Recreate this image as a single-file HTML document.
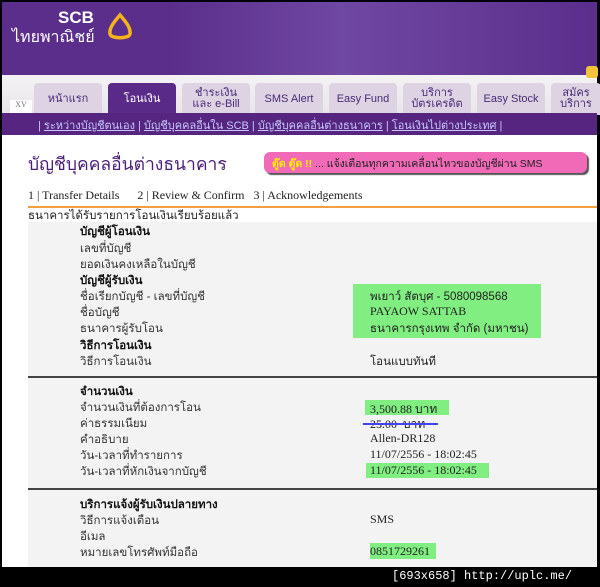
<!DOCTYPE html>
<html><head><meta charset="utf-8"><style>
*{margin:0;padding:0;box-sizing:border-box}
body{width:600px;height:587px;background:#000;position:relative;overflow:hidden;font-family:"Liberation Serif","Noto Sans CJK SC","WenQuanYi Zen Hei",serif;font-size:12px;color:#222}
.a{position:absolute}
.th{font-family:"Liberation Sans","Noto Sans CJK SC","WenQuanYi Zen Hei",sans-serif}
.tab{position:absolute;top:83px;height:32px;background:#ddd3e2;border-radius:4px 4px 0 0;color:#4a2a78;font-family:"Liberation Sans","WenQuanYi Zen Hei",sans-serif;font-size:11px;text-align:center;display:flex;align-items:center;justify-content:center;line-height:11px}
.lbl{position:absolute;left:80px;font-size:11.5px;font-family:"Liberation Sans","WenQuanYi Zen Hei",sans-serif;color:#333}
.b{font-weight:bold;color:#111}
.v{position:absolute;left:370px;font-size:12px;color:#222}
.g{background:#80ee80}
</style></head><body>
<div class="a" style="left:2px;top:2px;width:595px;height:565px;background:#fff"></div>
<div class="a" style="left:2px;top:2px;width:595px;height:73px;background:#5b2e8c"></div>
<div class="a" style="left:170px;top:2px;width:427px;height:73px;background:linear-gradient(90deg,#5b2e8c,#6f48a3 40%,#5b2e8c)"></div>
<div class="a th" style="left:58px;top:8px;color:#fff;font-size:17px;font-weight:bold">SCB</div>
<div class="a th" style="left:12px;top:25px;color:#fff;font-size:16px">ไทยพาณิชย์</div>
<svg class="a" style="left:106px;top:12px" width="28" height="30"><path d="M14 3 C8 10 3 16 4 22 C5 27 23 27 24 22 C25 16 20 10 14 3Z" fill="none" stroke="#f4b21b" stroke-width="3.5"/></svg>
<div class="a" style="left:2px;top:75px;width:595px;height:38px;background:linear-gradient(#f4f2f4,#e9e6ea)"></div>
<div class="a" style="left:10px;top:100px;width:22px;height:14px;background:#fff;font-size:8px;color:#777;text-align:center">XV</div>
<div class="tab" style="left:34px;width:68px">หน้าแรก</div>
<div class="tab" style="left:108px;width:68px;background:#5a2a88;color:#fff">โอนเงิน</div>
<div class="tab" style="left:182px;width:68px">ชำระเงิน<br>และ e-Bill</div>
<div class="tab" style="left:255px;width:68px">SMS Alert</div>
<div class="tab" style="left:329px;width:68px">Easy Fund</div>
<div class="tab" style="left:403px;width:68px">บริการ<br>บัตรเครดิต</div>
<div class="tab" style="left:477px;width:68px">Easy Stock</div>
<div class="tab" style="left:551px;width:50px">สมัคร<br>บริการ</div>
<div class="a" style="left:586px;top:66px;width:12px;height:12px;background:#f3c23a;border-radius:3px"></div>
<div class="a" style="left:2px;top:113px;width:595px;height:22px;background:#55257f"></div>
<div class="a th" style="left:38px;top:116px;color:#c8c8ff;font-size:11px;white-space:nowrap">| <u>ระหว่างบัญชีตนเอง</u> | <u>บัญชีบุคคลอื่นใน SCB</u> | <u>บัญชีบุคคลอื่นต่างธนาคาร</u> | <u>โอนเงินไปต่างประเทศ</u> |</div>
<div class="a th" style="left:28px;top:150px;color:#4a1f7a;font-size:17.5px">บัญชีบุคคลอื่นต่างธนาคาร</div>
<div class="a th" style="left:264px;top:152px;width:323px;height:21px;background:#f06ab8;border-radius:6px;box-shadow:2px 2px 1px #555;font-size:10.5px;color:#222;padding:3px 0 0 8px;white-space:nowrap"><b style="color:#ffee00">ตู๊ด ตู๊ด !!</b> ... แจ้งเตือนทุกความเคลื่อนไหวของบัญชีผ่าน SMS</div>
<div class="a" style="left:28px;top:188px;font-size:12px;white-space:nowrap">1 | Transfer Details &nbsp;&nbsp;&nbsp;&nbsp;&nbsp;2 | Review &amp; Confirm &nbsp;&nbsp;3 | Acknowledgements</div>
<div class="a" style="left:28px;top:206px;width:569px;height:2px;background:#f0a040"></div>
<div class="a th" style="left:28px;top:207px;font-size:11.5px">ธนาคารได้รับรายการโอนเงินเรียบร้อยแล้ว</div>
<div class="a" style="left:28px;top:222px;width:569px;height:345px;background:#f3f3f3"></div>
<div class="a" style="left:28px;top:376px;width:569px;height:2px;background:#444"></div>
<div class="a" style="left:28px;top:488px;width:569px;height:2px;background:#444"></div>
<div class="lbl b" style="top:223px">บัญชีผู้โอนเงิน</div>
<div class="lbl" style="top:240px">เลขที่บัญชี</div>
<div class="lbl" style="top:256px">ยอดเงินคงเหลือในบัญชี</div>
<div class="lbl b" style="top:272px">บัญชีผู้รับเงิน</div>
<div class="lbl" style="top:288px">ชื่อเรียกบัญชี - เลขที่บัญชี</div>
<div class="lbl" style="top:304px">ชื่อบัญชี</div>
<div class="lbl" style="top:320px">ธนาคารผู้รับโอน</div>
<div class="lbl b" style="top:337px">วิธีการโอนเงิน</div>
<div class="lbl" style="top:353px">วิธีการโอนเงิน</div>
<div class="a g" style="left:353px;top:284px;width:188px;height:54px"></div>
<div class="v th" style="top:288px;font-size:11.5px">พเยาว์ สัตบุศ - 5080098568</div>
<div class="v" style="top:304px">PAYAOW SATTAB</div>
<div class="v th" style="top:320px;font-size:11.5px">ธนาคารกรุงเทพ จำกัด (มหาชน)</div>
<div class="v th" style="top:353px;font-size:11.5px">โอนแบบทันที</div>
<div class="lbl b" style="top:383px">จำนวนเงิน</div>
<div class="lbl" style="top:399px">จำนวนเงินที่ต้องการโอน</div>
<div class="lbl" style="top:415px">ค่าธรรมเนียม</div>
<div class="lbl" style="top:431px">คำอธิบาย</div>
<div class="lbl" style="top:447px">วัน-เวลาที่ทำรายการ</div>
<div class="lbl" style="top:463px">วัน-เวลาที่หักเงินจากบัญชี</div>
<div class="a g" style="left:365px;top:400px;width:84px;height:15px"></div>
<div class="v" style="top:400px">3,500.88 บาท</div>
<div class="v" style="top:415px">25.00 &nbsp;บาท</div>
<div class="a" style="left:363px;top:423px;width:75px;height:2px;background:#4444ee"></div>
<div class="v" style="top:431px">Allen-DR128</div>
<div class="v" style="top:447px">11/07/2556 - 18:02:45</div>
<div class="a g" style="left:366px;top:463px;width:123px;height:15px"></div>
<div class="v" style="top:463px">11/07/2556 - 18:02:45</div>
<div class="lbl b" style="top:496px">บริการแจ้งผู้รับเงินปลายทาง</div>
<div class="lbl" style="top:512px">วิธีการแจ้งเตือน</div>
<div class="lbl" style="top:528px">อีเมล</div>
<div class="lbl" style="top:544px">หมายเลขโทรศัพท์มือถือ</div>
<div class="v" style="top:512px">SMS</div>
<div class="a g" style="left:370px;top:543px;width:66px;height:16px"></div>
<div class="v" style="top:544px">0851729261</div>
<div class="a" style="left:392px;top:569px;color:#fff;font-family:'Liberation Mono',monospace;font-size:12px">[693x658] http://uplc.me/</div>
</body></html>
